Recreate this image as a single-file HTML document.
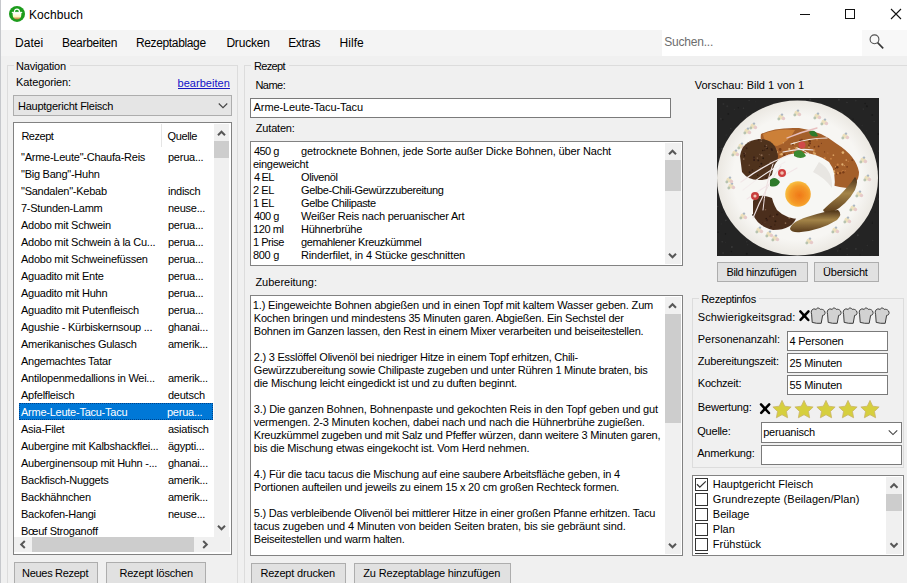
<!DOCTYPE html>
<html><head><meta charset="utf-8">
<style>
*{margin:0;padding:0;box-sizing:border-box}
html,body{width:907px;height:583px;overflow:hidden;background:#f0f0f0;font-family:"Liberation Sans",sans-serif;color:#000}
.a{position:absolute}
.t{position:absolute;font-size:11px;line-height:13px;white-space:pre}
</style></head><body>
<div class="a" style="left:0px;top:0px;width:1px;height:583px;background:#c6c8cc"></div>
<div class="a" style="left:1px;top:0px;width:906px;height:30px;background:#ffffff"></div>
<svg class="a" style="left:8px;top:5px" width="18" height="18" viewBox="0 0 18 18">
 <defs><linearGradient id="pot" x1="0" y1="0" x2="0" y2="1"><stop offset="0" stop-color="#ffffff"/><stop offset="0.55" stop-color="#fff6c0"/><stop offset="1" stop-color="#b86a20"/></linearGradient></defs>
 <circle cx="9" cy="8.9" r="8" fill="#1c9c1c"/>
 <path d="M4.6 8 h8.8 q0 4.5 -1.6 5.6 q-1.2 0.9 -2.8 0.9 q-1.6 0 -2.8 -0.9 q-1.6 -1.1 -1.6 -5.6z" fill="url(#pot)"/>
 <path d="M3.8 7.4 h10.4" stroke="#ffffff" stroke-width="1.1"/>
 <path d="M6.4 7.4 q0 -3.3 2.6 -3.3 q2.6 0 2.6 3.3" fill="none" stroke="#ffffff" stroke-width="1.2"/>
</svg>
<div class="t" id="title" style="left:29.00px;top:8px;font-size:12px;line-height:15px;letter-spacing:0.079px">Kochbuch</div>
<div class="a" style="left:800px;top:14px;width:10px;height:1px;background:#111"></div>
<div class="a" style="left:845px;top:9px;width:10px;height:10px;border:1px solid #111"></div>
<svg class="a" style="left:890px;top:8px" width="12" height="12" viewBox="0 0 12 12"><path d="M1 1 L11 11 M11 1 L1 11" stroke="#111" stroke-width="1.1"/></svg>
<div class="a" style="left:1px;top:30px;width:906px;height:26px;background:#f4f4f4"></div>
<div class="t" id="menu0" style="left:15.00px;top:36px;font-size:12px;line-height:15px;letter-spacing:0.025px">Datei</div>
<div class="t" id="menu1" style="left:62.00px;top:36px;font-size:12px;line-height:15px;letter-spacing:-0.294px">Bearbeiten</div>
<div class="t" id="menu2" style="left:136.00px;top:36px;font-size:12px;line-height:15px;letter-spacing:-0.363px">Rezeptablage</div>
<div class="t" id="menu3" style="left:226.40px;top:36px;font-size:12px;line-height:15px;letter-spacing:-0.183px">Drucken</div>
<div class="t" id="menu4" style="left:288.20px;top:36px;font-size:12px;line-height:15px;letter-spacing:-0.330px">Extras</div>
<div class="t" id="menu5" style="left:339.40px;top:36px;font-size:12px;line-height:15px;letter-spacing:0.100px">Hilfe</div>
<div class="a" style="left:662px;top:30px;width:200px;height:26px;background:#ffffff"></div>
<div class="a" style="left:862px;top:30px;width:45px;height:26px;background:#f8f8f8"></div>
<div class="t" id="search" style="left:664.20px;top:35px;font-size:12px;line-height:15px;letter-spacing:-0.200px;color:#6d6d6d">Suchen...</div>
<svg class="a" style="left:866px;top:31px" width="20" height="20" viewBox="0 0 20 20"><circle cx="8.5" cy="8.3" r="4.4" fill="none" stroke="#505050" stroke-width="1.1"/><path d="M11.6 11.6 L17.2 17.4" stroke="#383838" stroke-width="1.6"/></svg>
<div class="a" style="left:7px;top:65px;width:231px;height:530px;border:1px solid #dcdcdc"></div>
<div class="a" style="left:14px;top:60px;width:56px;height:10px;background:#f0f0f0"></div>
<div class="t" id="nav" style="left:16.00px;top:60px;font-size:11px;line-height:13px;letter-spacing:-0.215px">Navigation</div>
<div class="t" id="kat" style="left:16.00px;top:76px;font-size:11px;line-height:13px;letter-spacing:-0.110px">Kategorien:</div>
<div class="t" id="bearb" style="left:177.50px;top:77px;font-size:11px;line-height:13px;letter-spacing:0.040px;color:#1010c8">bearbeiten</div>
<div class="a" style="left:178px;top:88px;width:52px;height:1px;background:#1818c0"></div>
<div class="a" style="left:13px;top:95px;width:219px;height:21px;background:#e5e5e5;border:1px solid #adadad"></div>
<div class="t" id="combo" style="left:18.00px;top:100px;font-size:11px;line-height:13px;letter-spacing:-0.253px">Hauptgericht Fleisch</div>
<div class="a" style="left:13px;top:122px;width:219px;height:433px;background:#ffffff;border:1px solid #828282"></div>
<div class="t" id="hdr1" style="left:21.40px;top:130px;font-size:11px;line-height:13px;letter-spacing:-0.480px">Rezept</div>
<div class="a" style="left:161px;top:124px;width:1px;height:23px;background:#e5e5e5"></div>
<div class="t" id="hdr2" style="left:167.60px;top:130px;font-size:11px;line-height:13px;letter-spacing:-0.420px">Quelle</div>
<div class="a" style="left:19px;top:403px;width:194px;height:17px;background:#0078d7;outline:1px dotted rgba(0,0,40,0.45);outline-offset:-1px"></div>
<div class="a" style="left:14px;top:146px;width:200px;height:391px;overflow:hidden">
<div class="t" id="r0a" style="left:7.00px;top:5px;font-size:11px;line-height:13px;letter-spacing:-0.250px">&quot;Arme-Leute&quot;-Chaufa-Reis</div>
<div class="t" id="r0b" style="left:154.00px;top:5px;font-size:11px;line-height:13px;letter-spacing:-0.250px">perua...</div>
<div class="t" id="r1a" style="left:7.00px;top:22px;font-size:11px;line-height:13px;letter-spacing:-0.250px">&quot;Big Bang&quot;-Huhn</div>
<div class="t" id="r2a" style="left:7.00px;top:39px;font-size:11px;line-height:13px;letter-spacing:-0.250px">&quot;Sandalen&quot;-Kebab</div>
<div class="t" id="r2b" style="left:154.00px;top:39px;font-size:11px;line-height:13px;letter-spacing:-0.250px">indisch</div>
<div class="t" id="r3a" style="left:7.00px;top:56px;font-size:11px;line-height:13px;letter-spacing:-0.250px">7-Stunden-Lamm</div>
<div class="t" id="r3b" style="left:154.00px;top:56px;font-size:11px;line-height:13px;letter-spacing:-0.250px">neuse...</div>
<div class="t" id="r4a" style="left:7.00px;top:73px;font-size:11px;line-height:13px;letter-spacing:-0.250px">Adobo mit Schwein</div>
<div class="t" id="r4b" style="left:154.00px;top:73px;font-size:11px;line-height:13px;letter-spacing:-0.250px">perua...</div>
<div class="t" id="r5a" style="left:7.00px;top:90px;font-size:11px;line-height:13px;letter-spacing:-0.250px">Adobo mit Schwein à la Cu...</div>
<div class="t" id="r5b" style="left:154.00px;top:90px;font-size:11px;line-height:13px;letter-spacing:-0.250px">perua...</div>
<div class="t" id="r6a" style="left:7.00px;top:107px;font-size:11px;line-height:13px;letter-spacing:-0.250px">Adobo mit Schweinefüssen</div>
<div class="t" id="r6b" style="left:154.00px;top:107px;font-size:11px;line-height:13px;letter-spacing:-0.250px">perua...</div>
<div class="t" id="r7a" style="left:7.00px;top:124px;font-size:11px;line-height:13px;letter-spacing:-0.250px">Aguadito mit Ente</div>
<div class="t" id="r7b" style="left:154.00px;top:124px;font-size:11px;line-height:13px;letter-spacing:-0.250px">perua...</div>
<div class="t" id="r8a" style="left:7.00px;top:141px;font-size:11px;line-height:13px;letter-spacing:-0.250px">Aguadito mit Huhn</div>
<div class="t" id="r8b" style="left:154.00px;top:141px;font-size:11px;line-height:13px;letter-spacing:-0.250px">perua...</div>
<div class="t" id="r9a" style="left:7.00px;top:158px;font-size:11px;line-height:13px;letter-spacing:-0.250px">Aguadito mit Putenfleisch</div>
<div class="t" id="r9b" style="left:154.00px;top:158px;font-size:11px;line-height:13px;letter-spacing:-0.250px">perua...</div>
<div class="t" id="r10a" style="left:7.00px;top:175px;font-size:11px;line-height:13px;letter-spacing:-0.250px">Agushie - Kürbiskernsoup ...</div>
<div class="t" id="r10b" style="left:154.00px;top:175px;font-size:11px;line-height:13px;letter-spacing:-0.250px">ghanai...</div>
<div class="t" id="r11a" style="left:7.00px;top:192px;font-size:11px;line-height:13px;letter-spacing:-0.250px">Amerikanisches Gulasch</div>
<div class="t" id="r11b" style="left:154.00px;top:192px;font-size:11px;line-height:13px;letter-spacing:-0.250px">amerik...</div>
<div class="t" id="r12a" style="left:7.00px;top:209px;font-size:11px;line-height:13px;letter-spacing:-0.250px">Angemachtes Tatar</div>
<div class="t" id="r13a" style="left:7.00px;top:226px;font-size:11px;line-height:13px;letter-spacing:-0.250px">Antilopenmedallions in Wei...</div>
<div class="t" id="r13b" style="left:154.00px;top:226px;font-size:11px;line-height:13px;letter-spacing:-0.250px">amerik...</div>
<div class="t" id="r14a" style="left:7.00px;top:243px;font-size:11px;line-height:13px;letter-spacing:-0.250px">Apfelfleisch</div>
<div class="t" id="r14b" style="left:154.00px;top:243px;font-size:11px;line-height:13px;letter-spacing:-0.250px">deutsch</div>
<div class="t" id="r15a" style="left:7.00px;top:260px;font-size:11px;line-height:13px;letter-spacing:-0.250px;color:#ffffff">Arme-Leute-Tacu-Tacu</div>
<div class="t" id="r15b" style="left:153.00px;top:260px;font-size:11px;line-height:13px;letter-spacing:-0.250px;color:#ffffff">perua...</div>
<div class="t" id="r16a" style="left:7.00px;top:277px;font-size:11px;line-height:13px;letter-spacing:-0.250px">Asia-Filet</div>
<div class="t" id="r16b" style="left:154.00px;top:277px;font-size:11px;line-height:13px;letter-spacing:-0.250px">asiatisch</div>
<div class="t" id="r17a" style="left:7.00px;top:294px;font-size:11px;line-height:13px;letter-spacing:-0.250px">Aubergine mit Kalbshackflei...</div>
<div class="t" id="r17b" style="left:154.00px;top:294px;font-size:11px;line-height:13px;letter-spacing:-0.250px">ägypti...</div>
<div class="t" id="r18a" style="left:7.00px;top:311px;font-size:11px;line-height:13px;letter-spacing:-0.250px">Auberginensoup mit Huhn -...</div>
<div class="t" id="r18b" style="left:154.00px;top:311px;font-size:11px;line-height:13px;letter-spacing:-0.250px">ghanai...</div>
<div class="t" id="r19a" style="left:7.00px;top:328px;font-size:11px;line-height:13px;letter-spacing:-0.250px">Backfisch-Nuggets</div>
<div class="t" id="r19b" style="left:154.00px;top:328px;font-size:11px;line-height:13px;letter-spacing:-0.250px">amerik...</div>
<div class="t" id="r20a" style="left:7.00px;top:345px;font-size:11px;line-height:13px;letter-spacing:-0.250px">Backhähnchen</div>
<div class="t" id="r20b" style="left:154.00px;top:345px;font-size:11px;line-height:13px;letter-spacing:-0.250px">amerik...</div>
<div class="t" id="r21a" style="left:7.00px;top:362px;font-size:11px;line-height:13px;letter-spacing:-0.250px">Backofen-Hangi</div>
<div class="t" id="r21b" style="left:154.00px;top:362px;font-size:11px;line-height:13px;letter-spacing:-0.250px">neuse...</div>
<div class="t" id="r22a" style="left:7.00px;top:379px;font-size:11px;line-height:13px;letter-spacing:-0.250px">Bœuf Stroganoff</div>
</div>
<div class="a" style="left:214px;top:124px;width:15px;height:413px;background:#f0f0f0"></div>
<div class="a" style="left:214px;top:141px;width:15px;height:17px;background:#cdcdcd"></div>
<div class="a" style="left:14px;top:537px;width:216px;height:15px;background:#f0f0f0"></div>
<div class="a" style="left:32px;top:537px;width:162px;height:15px;background:#cdcdcd"></div>
<div class="a" style="left:14px;top:562px;width:84px;height:23px;background:#e1e1e1;border:1px solid #adadad"></div>
<div class="t" id="b1" style="left:22.00px;top:567px;font-size:11px;line-height:13px;letter-spacing:-0.291px">Neues Rezept</div>
<div class="a" style="left:106px;top:562px;width:100px;height:23px;background:#e1e1e1;border:1px solid #adadad"></div>
<div class="t" id="b2" style="left:119.40px;top:567px;font-size:11px;line-height:13px;letter-spacing:-0.164px">Rezept löschen</div>
<div class="a" style="left:244px;top:65px;width:700px;height:530px;border:1px solid #dcdcdc"></div>
<div class="a" style="left:251px;top:60px;width:38px;height:10px;background:#f0f0f0"></div>
<div class="t" id="rez" style="left:254.00px;top:60px;font-size:11px;line-height:13px;letter-spacing:-0.660px">Rezept</div>
<div class="t" id="name" style="left:255.40px;top:79px;font-size:11px;line-height:13px;letter-spacing:-0.525px">Name:</div>
<div class="a" style="left:250px;top:98px;width:421px;height:20px;background:#ffffff;border:1px solid #7a7a7a"></div>
<div class="t" id="namev" style="left:253.60px;top:101px;font-size:11px;line-height:13px;letter-spacing:-0.094px">Arme-Leute-Tacu-Tacu</div>
<div class="t" id="zut" style="left:255.80px;top:122px;font-size:11px;line-height:13px;letter-spacing:-0.187px">Zutaten:</div>
<div class="a" style="left:250px;top:141px;width:433px;height:125px;background:#ffffff;border:1px solid #828282"></div>
<div class="t" id="z0a" style="left:253.90px;top:145px;font-size:11px;line-height:13px;letter-spacing:-0.530px">450 g</div>
<div class="t" id="z0b" style="left:301.00px;top:145px;font-size:11px;line-height:13px;letter-spacing:-0.130px">getrocknete Bohnen, jede Sorte außer Dicke Bohnen, über Nacht</div>
<div class="t" id="z1a" style="left:252.90px;top:158px;font-size:11px;line-height:13px;letter-spacing:-0.250px">eingeweicht</div>
<div class="t" id="z2a" style="left:253.90px;top:171px;font-size:11px;line-height:13px;letter-spacing:-0.729px">4 EL</div>
<div class="t" id="z2b" style="left:301.00px;top:171px;font-size:11px;line-height:13px;letter-spacing:-0.416px">Olivenöl</div>
<div class="t" id="z3a" style="left:252.90px;top:184px;font-size:11px;line-height:13px;letter-spacing:-0.396px">2 EL</div>
<div class="t" id="z3b" style="left:301.00px;top:184px;font-size:11px;line-height:13px;letter-spacing:-0.380px">Gelbe-Chili-Gewürzzubereitung</div>
<div class="t" id="z4a" style="left:252.90px;top:197px;font-size:11px;line-height:13px;letter-spacing:-0.397px">1 EL</div>
<div class="t" id="z4b" style="left:301.00px;top:197px;font-size:11px;line-height:13px;letter-spacing:-0.369px">Gelbe Chilipaste</div>
<div class="t" id="z5a" style="left:253.90px;top:210px;font-size:11px;line-height:13px;letter-spacing:-0.530px">400 g</div>
<div class="t" id="z5b" style="left:301.00px;top:210px;font-size:11px;line-height:13px;letter-spacing:-0.212px">Weißer Reis nach peruanischer Art</div>
<div class="t" id="z6a" style="left:252.90px;top:223px;font-size:11px;line-height:13px;letter-spacing:-0.370px">120 ml</div>
<div class="t" id="z6b" style="left:301.00px;top:223px;font-size:11px;line-height:13px;letter-spacing:-0.290px">Hühnerbrühe</div>
<div class="t" id="z7a" style="left:252.90px;top:236px;font-size:11px;line-height:13px;letter-spacing:-0.463px">1 Prise</div>
<div class="t" id="z7b" style="left:301.00px;top:236px;font-size:11px;line-height:13px;letter-spacing:-0.368px">gemahlener Kreuzkümmel</div>
<div class="t" id="z8a" style="left:252.90px;top:249px;font-size:11px;line-height:13px;letter-spacing:-0.280px">800 g</div>
<div class="t" id="z8b" style="left:301.00px;top:249px;font-size:11px;line-height:13px;letter-spacing:-0.147px">Rinderfilet, in 4 Stücke geschnitten</div>
<div class="a" style="left:665px;top:143px;width:16px;height:121px;background:#f0f0f0"></div>
<div class="a" style="left:665px;top:160px;width:16px;height:31px;background:#cdcdcd"></div>
<div class="t" id="zub" style="left:255.40px;top:276px;font-size:11px;line-height:13px;letter-spacing:-0.018px">Zubereitung:</div>
<div class="a" style="left:250px;top:295px;width:433px;height:261px;background:#ffffff;border:1px solid #828282"></div>
<div class="t" id="zb0" style="left:252.80px;top:299px;font-size:11px;line-height:13px;letter-spacing:-0.157px">1.) Eingeweichte Bohnen abgießen und in einen Topf mit kaltem Wasser geben. Zum</div>
<div class="t" id="zb1" style="left:253.80px;top:312px;font-size:11px;line-height:13px;letter-spacing:-0.208px">Kochen bringen und mindestens 35 Minuten garen. Abgießen. Ein Sechstel der</div>
<div class="t" id="zb2" style="left:253.80px;top:325px;font-size:11px;line-height:13px;letter-spacing:-0.241px">Bohnen im Ganzen lassen, den Rest in einem Mixer verarbeiten und beiseitestellen.</div>
<div class="t" id="zb4" style="left:253.80px;top:351px;font-size:11px;line-height:13px;letter-spacing:-0.246px">2.) 3 Esslöffel Olivenöl bei niedriger Hitze in einem Topf erhitzen, Chili-</div>
<div class="t" id="zb5" style="left:253.80px;top:364px;font-size:11px;line-height:13px;letter-spacing:-0.222px">Gewürzzubereitung sowie Chilipaste zugeben und unter Rühren 1 Minute braten, bis</div>
<div class="t" id="zb6" style="left:253.80px;top:377px;font-size:11px;line-height:13px;letter-spacing:-0.157px">die Mischung leicht eingedickt ist und zu duften beginnt.</div>
<div class="t" id="zb8" style="left:253.80px;top:403px;font-size:11px;line-height:13px;letter-spacing:-0.122px">3.) Die ganzen Bohnen, Bohnenpaste und gekochten Reis in den Topf geben und gut</div>
<div class="t" id="zb9" style="left:253.80px;top:416px;font-size:11px;line-height:13px;letter-spacing:-0.153px">vermengen. 2-3 Minuten kochen, dabei nach und nach die Hühnerbrühe zugießen.</div>
<div class="t" id="zb10" style="left:253.80px;top:429px;font-size:11px;line-height:13px;letter-spacing:-0.238px">Kreuzkümmel zugeben und mit Salz und Pfeffer würzen, dann weitere 3 Minuten garen,</div>
<div class="t" id="zb11" style="left:253.80px;top:442px;font-size:11px;line-height:13px;letter-spacing:-0.171px">bis die Mischung etwas eingekocht ist. Vom Herd nehmen.</div>
<div class="t" id="zb13" style="left:253.80px;top:468px;font-size:11px;line-height:13px;letter-spacing:-0.173px">4.) Für die tacu tacus die Mischung auf eine saubere Arbeitsfläche geben, in 4</div>
<div class="t" id="zb14" style="left:253.80px;top:481px;font-size:11px;line-height:13px;letter-spacing:-0.207px">Portionen aufteilen und jeweils zu einem 15 x 20 cm großen Rechteck formen.</div>
<div class="t" id="zb16" style="left:253.80px;top:507px;font-size:11px;line-height:13px;letter-spacing:-0.206px">5.) Das verbleibende Olivenöl bei mittlerer Hitze in einer großen Pfanne erhitzen. Tacu</div>
<div class="t" id="zb17" style="left:253.80px;top:520px;font-size:11px;line-height:13px;letter-spacing:-0.104px">tacus zugeben und 4 Minuten von beiden Seiten braten, bis sie gebräunt sind.</div>
<div class="t" id="zb18" style="left:253.80px;top:533px;font-size:11px;line-height:13px;letter-spacing:-0.240px">Beiseitestellen und warm halten.</div>
<div class="a" style="left:665px;top:297px;width:16px;height:257px;background:#f0f0f0"></div>
<div class="a" style="left:665px;top:314px;width:16px;height:109px;background:#cdcdcd"></div>
<div class="a" style="left:251px;top:563px;width:95px;height:23px;background:#e1e1e1;border:1px solid #adadad"></div>
<div class="t" id="b3" style="left:260.40px;top:567px;font-size:11px;line-height:13px;letter-spacing:-0.182px">Rezept drucken</div>
<div class="a" style="left:354px;top:563px;width:157px;height:23px;background:#e1e1e1;border:1px solid #adadad"></div>
<div class="t" id="b4" style="left:363.20px;top:567px;font-size:11px;line-height:13px;letter-spacing:-0.140px">Zu Rezeptablage hinzufügen</div>
<div class="t" id="vor" style="left:694.80px;top:79px;font-size:11px;line-height:13px;letter-spacing:-0.010px">Vorschau: Bild 1 von 1</div>
<svg class="a" style="left:717px;top:98px" width="162" height="158" viewBox="0 0 162 158">
<defs>
<filter id="bl" x="-10%" y="-10%" width="120%" height="120%"><feGaussianBlur stdDeviation="0.6"/></filter>
<filter id="bl2" x="-10%" y="-10%" width="120%" height="120%"><feGaussianBlur stdDeviation="1.0"/></filter>
<radialGradient id="yolk" cx="0.55" cy="0.55" r="0.6"><stop offset="0" stop-color="#f07818"/><stop offset="0.6" stop-color="#f59a28"/><stop offset="1" stop-color="#f8c848"/></radialGradient>
<radialGradient id="plate" cx="0.5" cy="0.5" r="0.5"><stop offset="0.8" stop-color="#f7f6f3"/><stop offset="1" stop-color="#ebe8e2"/></radialGradient>
<linearGradient id="plant" x1="0" y1="0" x2="0" y2="1"><stop offset="0" stop-color="#4a3018"/><stop offset="0.45" stop-color="#a48448"/><stop offset="1" stop-color="#5a3c1c"/></linearGradient>
</defs>
<rect width="162" height="158" fill="#242424"/>
<g><circle cx="9.2" cy="37.0" r="0.50" fill="#383838"/><circle cx="120.6" cy="152.9" r="0.83" fill="#303030"/><circle cx="8.4" cy="144.5" r="0.46" fill="#303030"/><circle cx="146.4" cy="11.1" r="0.85" fill="#303030"/><circle cx="145.6" cy="152.1" r="0.52" fill="#303030"/><circle cx="123.2" cy="151.0" r="0.93" fill="#1a1a1a"/><circle cx="155.3" cy="124.1" r="0.54" fill="#1a1a1a"/><circle cx="14.4" cy="153.4" r="0.73" fill="#1a1a1a"/><circle cx="155.8" cy="142.2" r="0.54" fill="#383838"/><circle cx="161.6" cy="101.1" r="0.93" fill="#303030"/><circle cx="5.8" cy="21.5" r="0.64" fill="#1a1a1a"/><circle cx="26.5" cy="10.2" r="0.67" fill="#383838"/><circle cx="32.1" cy="2.4" r="0.72" fill="#383838"/><circle cx="38.3" cy="3.8" r="0.45" fill="#303030"/><circle cx="157.1" cy="23.5" r="0.60" fill="#383838"/><circle cx="10.3" cy="8.3" r="0.98" fill="#303030"/><circle cx="30.5" cy="146.8" r="0.74" fill="#303030"/><circle cx="2.7" cy="49.2" r="0.44" fill="#1a1a1a"/><circle cx="5.0" cy="114.4" r="0.53" fill="#1a1a1a"/><circle cx="29.8" cy="155.8" r="1.00" fill="#1a1a1a"/><circle cx="21.3" cy="9.8" r="0.68" fill="#1a1a1a"/><circle cx="155.3" cy="125.5" r="0.59" fill="#1a1a1a"/><circle cx="4.9" cy="50.7" r="0.87" fill="#383838"/><circle cx="150.3" cy="147.6" r="0.77" fill="#303030"/><circle cx="124.6" cy="13.9" r="0.95" fill="#303030"/><circle cx="6.1" cy="155.0" r="0.95" fill="#303030"/><circle cx="5.2" cy="143.8" r="0.80" fill="#383838"/><circle cx="17.3" cy="11.2" r="0.50" fill="#383838"/><circle cx="14.9" cy="149.0" r="0.96" fill="#383838"/><circle cx="155.2" cy="16.9" r="0.89" fill="#1a1a1a"/><circle cx="130.0" cy="4.4" r="0.71" fill="#383838"/><circle cx="93.1" cy="1.6" r="0.86" fill="#383838"/><circle cx="6.4" cy="5.9" r="1.00" fill="#303030"/><circle cx="130.3" cy="156.5" r="0.84" fill="#303030"/><circle cx="136.0" cy="21.1" r="0.72" fill="#1a1a1a"/><circle cx="145.1" cy="27.3" r="0.59" fill="#303030"/><circle cx="138.9" cy="150.8" r="0.92" fill="#383838"/><circle cx="4.2" cy="125.9" r="0.54" fill="#303030"/><circle cx="8.5" cy="135.9" r="0.78" fill="#1a1a1a"/><circle cx="130.0" cy="150.7" r="0.59" fill="#383838"/><circle cx="97.2" cy="157.6" r="0.94" fill="#303030"/><circle cx="148.1" cy="5.5" r="0.75" fill="#1a1a1a"/><circle cx="3.8" cy="20.7" r="1.00" fill="#303030"/><circle cx="143.1" cy="156.8" r="0.66" fill="#1a1a1a"/><circle cx="121.9" cy="1.7" r="0.92" fill="#383838"/><circle cx="155.0" cy="158.0" r="0.74" fill="#303030"/><circle cx="29.7" cy="143.8" r="0.73" fill="#303030"/><circle cx="149.7" cy="32.8" r="0.41" fill="#383838"/><circle cx="8.8" cy="122.3" r="0.88" fill="#383838"/><circle cx="158.1" cy="114.0" r="0.47" fill="#1a1a1a"/><circle cx="149.9" cy="8.3" r="0.97" fill="#1a1a1a"/><circle cx="140.8" cy="137.2" r="0.94" fill="#383838"/><circle cx="161.6" cy="53.1" r="0.86" fill="#303030"/><circle cx="161.4" cy="36.0" r="0.92" fill="#1a1a1a"/><circle cx="13.8" cy="30.5" r="0.59" fill="#383838"/><circle cx="11.3" cy="15.9" r="0.84" fill="#1a1a1a"/><circle cx="1.0" cy="134.2" r="0.84" fill="#1a1a1a"/><circle cx="0.6" cy="108.5" r="0.78" fill="#383838"/><circle cx="29.6" cy="18.2" r="0.94" fill="#303030"/><circle cx="138.8" cy="2.6" r="0.88" fill="#303030"/></g>
<ellipse cx="80.5" cy="80" rx="80.5" ry="77.5" fill="url(#plate)"/>
<g filter="url(#bl)" opacity="0.8"><circle cx="36" cy="28" r="2.6" fill="#ebdcb0"/><circle cx="38.5" cy="29.5" r="1.7" fill="#e4c0c0"/><circle cx="33.8" cy="30" r="1.4" fill="#a8b8a0"/><circle cx="37" cy="25.6" r="1.2" fill="#9aa8b8"/><circle cx="30" cy="33" r="2.6" fill="#ebdcb0"/><circle cx="32.5" cy="34.5" r="1.7" fill="#e4c0c0"/><circle cx="27.8" cy="35" r="1.4" fill="#a8b8a0"/><circle cx="31" cy="30.6" r="1.2" fill="#9aa8b8"/><circle cx="64" cy="19" r="2.6" fill="#ebdcb0"/><circle cx="66.5" cy="20.5" r="1.7" fill="#e4c0c0"/><circle cx="61.8" cy="21" r="1.4" fill="#a8b8a0"/><circle cx="65" cy="16.6" r="1.2" fill="#9aa8b8"/><circle cx="100" cy="18" r="2.6" fill="#ebdcb0"/><circle cx="102.5" cy="19.5" r="1.7" fill="#e4c0c0"/><circle cx="97.8" cy="20" r="1.4" fill="#a8b8a0"/><circle cx="101" cy="15.6" r="1.2" fill="#9aa8b8"/><circle cx="107" cy="24" r="2.6" fill="#ebdcb0"/><circle cx="109.5" cy="25.5" r="1.7" fill="#e4c0c0"/><circle cx="104.8" cy="26" r="1.4" fill="#a8b8a0"/><circle cx="108" cy="21.6" r="1.2" fill="#9aa8b8"/><circle cx="128" cy="38" r="2.6" fill="#ebdcb0"/><circle cx="130.5" cy="39.5" r="1.7" fill="#e4c0c0"/><circle cx="125.8" cy="40" r="1.4" fill="#a8b8a0"/><circle cx="129" cy="35.6" r="1.2" fill="#9aa8b8"/><circle cx="146" cy="62" r="2.6" fill="#ebdcb0"/><circle cx="148.5" cy="63.5" r="1.7" fill="#e4c0c0"/><circle cx="143.8" cy="64" r="1.4" fill="#a8b8a0"/><circle cx="147" cy="59.6" r="1.2" fill="#9aa8b8"/><circle cx="142" cy="96" r="2.6" fill="#ebdcb0"/><circle cx="144.5" cy="97.5" r="1.7" fill="#e4c0c0"/><circle cx="139.8" cy="98" r="1.4" fill="#a8b8a0"/><circle cx="143" cy="93.6" r="1.2" fill="#9aa8b8"/><circle cx="130" cy="122" r="2.6" fill="#ebdcb0"/><circle cx="132.5" cy="123.5" r="1.7" fill="#e4c0c0"/><circle cx="127.8" cy="124" r="1.4" fill="#a8b8a0"/><circle cx="131" cy="119.6" r="1.2" fill="#9aa8b8"/><circle cx="118" cy="132" r="2.6" fill="#ebdcb0"/><circle cx="120.5" cy="133.5" r="1.7" fill="#e4c0c0"/><circle cx="115.8" cy="134" r="1.4" fill="#a8b8a0"/><circle cx="119" cy="129.6" r="1.2" fill="#9aa8b8"/><circle cx="92" cy="143" r="2.6" fill="#ebdcb0"/><circle cx="94.5" cy="144.5" r="1.7" fill="#e4c0c0"/><circle cx="89.8" cy="145" r="1.4" fill="#a8b8a0"/><circle cx="93" cy="140.6" r="1.2" fill="#9aa8b8"/><circle cx="58" cy="140" r="2.6" fill="#ebdcb0"/><circle cx="60.5" cy="141.5" r="1.7" fill="#e4c0c0"/><circle cx="55.8" cy="142" r="1.4" fill="#a8b8a0"/><circle cx="59" cy="137.6" r="1.2" fill="#9aa8b8"/><circle cx="52" cy="136" r="2.6" fill="#ebdcb0"/><circle cx="54.5" cy="137.5" r="1.7" fill="#e4c0c0"/><circle cx="49.8" cy="138" r="1.4" fill="#a8b8a0"/><circle cx="53" cy="133.6" r="1.2" fill="#9aa8b8"/><circle cx="26" cy="118" r="2.6" fill="#ebdcb0"/><circle cx="28.5" cy="119.5" r="1.7" fill="#e4c0c0"/><circle cx="23.8" cy="120" r="1.4" fill="#a8b8a0"/><circle cx="27" cy="115.6" r="1.2" fill="#9aa8b8"/><circle cx="14" cy="88" r="2.6" fill="#ebdcb0"/><circle cx="16.5" cy="89.5" r="1.7" fill="#e4c0c0"/><circle cx="11.8" cy="90" r="1.4" fill="#a8b8a0"/><circle cx="15" cy="85.6" r="1.2" fill="#9aa8b8"/><circle cx="12" cy="82" r="2.6" fill="#ebdcb0"/><circle cx="14.5" cy="83.5" r="1.7" fill="#e4c0c0"/><circle cx="9.8" cy="84" r="1.4" fill="#a8b8a0"/><circle cx="13" cy="79.6" r="1.2" fill="#9aa8b8"/><circle cx="18" cy="55" r="2.6" fill="#ebdcb0"/><circle cx="20.5" cy="56.5" r="1.7" fill="#e4c0c0"/><circle cx="15.8" cy="57" r="1.4" fill="#a8b8a0"/><circle cx="19" cy="52.6" r="1.2" fill="#9aa8b8"/><circle cx="24" cy="48" r="2.6" fill="#ebdcb0"/><circle cx="26.5" cy="49.5" r="1.7" fill="#e4c0c0"/><circle cx="21.8" cy="50" r="1.4" fill="#a8b8a0"/><circle cx="25" cy="45.6" r="1.2" fill="#9aa8b8"/><circle cx="150" cy="80" r="2.6" fill="#ebdcb0"/><circle cx="152.5" cy="81.5" r="1.7" fill="#e4c0c0"/><circle cx="147.8" cy="82" r="1.4" fill="#a8b8a0"/><circle cx="151" cy="77.6" r="1.2" fill="#9aa8b8"/><circle cx="80" cy="15" r="2.6" fill="#ebdcb0"/><circle cx="82.5" cy="16.5" r="1.7" fill="#e4c0c0"/><circle cx="77.8" cy="17" r="1.4" fill="#a8b8a0"/><circle cx="81" cy="12.6" r="1.2" fill="#9aa8b8"/><circle cx="42" cy="132" r="2.6" fill="#ebdcb0"/><circle cx="44.5" cy="133.5" r="1.7" fill="#e4c0c0"/><circle cx="39.8" cy="134" r="1.4" fill="#a8b8a0"/><circle cx="43" cy="129.6" r="1.2" fill="#9aa8b8"/><circle cx="136" cy="110" r="2.6" fill="#ebdcb0"/><circle cx="138.5" cy="111.5" r="1.7" fill="#e4c0c0"/><circle cx="133.8" cy="112" r="1.4" fill="#a8b8a0"/><circle cx="137" cy="107.6" r="1.2" fill="#9aa8b8"/></g>
<g filter="url(#bl)">
<path d="M44 36 Q58 29 82 30 Q104 33 120 46 Q139 58 142 74 Q142 86 130 90 Q112 88 96 80 Q70 70 52 58 Q42 47 44 36Z" fill="#a45e2c"/>
<path d="M46 36 Q60 30 78 32 Q72 44 60 48 Q47 46 46 36Z" fill="#cc8038"/>
<g><circle cx="86.8" cy="57.8" r="0.55" fill="#6a3414"/><circle cx="125.9" cy="73.6" r="1.33" fill="#c88040"/><circle cx="67.3" cy="56.7" r="1.30" fill="#7a3e18"/><circle cx="67.9" cy="58.3" r="1.01" fill="#7a3e18"/><circle cx="129.3" cy="62.0" r="0.86" fill="#d8a060"/><circle cx="77.8" cy="49.3" r="0.63" fill="#c88040"/><circle cx="119.9" cy="75.6" r="1.12" fill="#6a3414"/><circle cx="121.5" cy="75.5" r="0.66" fill="#c88040"/><circle cx="116.9" cy="73.2" r="1.17" fill="#d8a060"/><circle cx="83.5" cy="53.6" r="0.68" fill="#c88040"/><circle cx="113.9" cy="60.7" r="0.97" fill="#c88040"/><circle cx="135.2" cy="62.1" r="0.96" fill="#7a3e18"/><circle cx="103.0" cy="63.9" r="0.81" fill="#d8a060"/><circle cx="107.8" cy="60.2" r="0.96" fill="#c88040"/><circle cx="59.0" cy="52.0" r="1.39" fill="#c88040"/><circle cx="63.1" cy="51.5" r="1.39" fill="#7a3e18"/><circle cx="120.8" cy="74.9" r="1.23" fill="#c88040"/><circle cx="97.2" cy="52.4" r="1.09" fill="#c88040"/><circle cx="76.6" cy="45.8" r="0.57" fill="#6a3414"/><circle cx="55.7" cy="49.9" r="1.26" fill="#d8a060"/><circle cx="52.6" cy="53.4" r="0.86" fill="#7a3e18"/><circle cx="95.4" cy="57.0" r="0.89" fill="#c88040"/><circle cx="127.2" cy="67.6" r="0.53" fill="#e0b070"/><circle cx="104.4" cy="45.2" r="0.54" fill="#6a3414"/><circle cx="66.9" cy="65.4" r="0.97" fill="#e0b070"/><circle cx="68.7" cy="58.5" r="0.94" fill="#c88040"/><circle cx="116.4" cy="57.2" r="0.86" fill="#d8a060"/><circle cx="107.6" cy="59.8" r="0.84" fill="#c88040"/><circle cx="72.3" cy="51.1" r="1.16" fill="#e0b070"/><circle cx="100.0" cy="41.4" r="1.14" fill="#c88040"/><circle cx="72.6" cy="59.1" r="1.29" fill="#7a3e18"/><circle cx="66.4" cy="44.8" r="0.78" fill="#d8a060"/><circle cx="57.9" cy="65.8" r="1.28" fill="#c88040"/><circle cx="104.4" cy="61.7" r="0.86" fill="#d8a060"/><circle cx="93.6" cy="57.6" r="1.20" fill="#7a3e18"/><circle cx="101.6" cy="48.4" r="0.88" fill="#6a3414"/><circle cx="131.3" cy="63.3" r="0.56" fill="#c88040"/><circle cx="93.5" cy="56.9" r="1.19" fill="#e0b070"/><circle cx="83.6" cy="49.0" r="1.37" fill="#6a3414"/><circle cx="91.9" cy="48.0" r="0.97" fill="#6a3414"/><circle cx="91.1" cy="55.4" r="1.08" fill="#e0b070"/><circle cx="117.3" cy="75.5" r="0.98" fill="#e0b070"/><circle cx="84.8" cy="41.9" r="1.08" fill="#7a3e18"/><circle cx="97.4" cy="60.0" r="1.27" fill="#6a3414"/><circle cx="92.4" cy="48.6" r="0.69" fill="#6a3414"/><circle cx="77.1" cy="45.4" r="1.17" fill="#e0b070"/><circle cx="93.1" cy="45.4" r="0.89" fill="#6a3414"/><circle cx="80.1" cy="54.9" r="1.25" fill="#c88040"/><circle cx="120.7" cy="66.7" r="1.08" fill="#c88040"/><circle cx="56.5" cy="51.6" r="0.64" fill="#e0b070"/><circle cx="118.8" cy="68.7" r="0.68" fill="#d8a060"/><circle cx="59.9" cy="54.2" r="1.17" fill="#e0b070"/><circle cx="75.8" cy="46.5" r="0.99" fill="#7a3e18"/><circle cx="126.3" cy="74.2" r="1.21" fill="#7a3e18"/><circle cx="125.8" cy="54.7" r="0.64" fill="#e0b070"/><circle cx="120.2" cy="69.3" r="1.29" fill="#6a3414"/><circle cx="80.0" cy="52.7" r="1.39" fill="#6a3414"/><circle cx="88.1" cy="59.4" r="0.63" fill="#6a3414"/><circle cx="125.4" cy="66.5" r="1.13" fill="#e0b070"/><circle cx="114.9" cy="72.8" r="1.34" fill="#c88040"/><circle cx="100.2" cy="61.5" r="0.78" fill="#6a3414"/><circle cx="91.8" cy="46.2" r="0.55" fill="#6a3414"/><circle cx="97.4" cy="48.8" r="0.89" fill="#7a3e18"/><circle cx="92.6" cy="43.3" r="1.27" fill="#6a3414"/><circle cx="128.2" cy="72.6" r="0.58" fill="#c88040"/><circle cx="96.7" cy="54.5" r="0.97" fill="#d8a060"/><circle cx="60.2" cy="61.6" r="0.84" fill="#e0b070"/><circle cx="79.5" cy="50.3" r="1.31" fill="#d8a060"/><circle cx="63.2" cy="65.7" r="0.65" fill="#c88040"/><circle cx="84.0" cy="54.9" r="0.75" fill="#e0b070"/><circle cx="118.4" cy="70.5" r="0.52" fill="#6a3414"/><circle cx="72.0" cy="55.4" r="0.58" fill="#7a3e18"/><circle cx="63.0" cy="66.4" r="1.26" fill="#6a3414"/><circle cx="51.9" cy="63.3" r="1.00" fill="#c88040"/><circle cx="83.2" cy="42.4" r="0.92" fill="#6a3414"/><circle cx="88.9" cy="58.0" r="1.30" fill="#c88040"/><circle cx="123.1" cy="75.1" r="1.21" fill="#7a3e18"/><circle cx="130.1" cy="68.8" r="0.84" fill="#7a3e18"/><circle cx="63.1" cy="56.5" r="1.04" fill="#c88040"/><circle cx="68.2" cy="63.5" r="1.19" fill="#6a3414"/><circle cx="97.7" cy="55.8" r="1.39" fill="#d8a060"/><circle cx="67.0" cy="63.0" r="1.14" fill="#d8a060"/><circle cx="62.5" cy="63.7" r="0.56" fill="#d8a060"/><circle cx="75.7" cy="54.4" r="0.89" fill="#c88040"/><circle cx="107.6" cy="53.9" r="0.64" fill="#7a3e18"/><circle cx="92.0" cy="49.1" r="0.85" fill="#d8a060"/><circle cx="64.6" cy="56.2" r="1.26" fill="#e0b070"/><circle cx="56.9" cy="65.2" r="1.09" fill="#e0b070"/><circle cx="110.9" cy="55.1" r="0.50" fill="#c88040"/><circle cx="125.9" cy="54.6" r="1.32" fill="#e0b070"/></g>
<path d="M23 58 Q25 43 42 41 Q59 41 61 58 Q61 74 50 81 Q33 85 25 74Z" fill="#50321f"/>
<path d="M36 103 Q40 95 52 99 Q74 106 80 118 Q76 132 56 132 Q40 128 36 116Z" fill="#4c2e1c"/>
<g><circle cx="54.0" cy="128.8" r="0.78" fill="#2e1a10"/><circle cx="52.1" cy="56.8" r="0.46" fill="#8a6a50"/><circle cx="45.9" cy="104.5" r="0.76" fill="#3a2216"/><circle cx="36.0" cy="116.9" r="0.88" fill="#2e1a10"/><circle cx="40.7" cy="77.3" r="0.79" fill="#2e1a10"/><circle cx="74.5" cy="108.4" r="0.78" fill="#2e1a10"/><circle cx="48.6" cy="111.8" r="0.70" fill="#7a5a44"/><circle cx="60.4" cy="116.5" r="1.06" fill="#3a2216"/><circle cx="44.2" cy="43.2" r="0.75" fill="#8a6a50"/><circle cx="32.3" cy="67.3" r="0.80" fill="#7a5a44"/><circle cx="49.2" cy="120.6" r="0.92" fill="#2e1a10"/><circle cx="54.6" cy="51.1" r="1.09" fill="#3a2216"/><circle cx="45.8" cy="79.3" r="0.47" fill="#2e1a10"/><circle cx="52.9" cy="118.4" r="0.85" fill="#3a2216"/><circle cx="67.3" cy="112.2" r="0.98" fill="#2e1a10"/><circle cx="53.6" cy="117.1" r="0.58" fill="#3a2216"/><circle cx="50.1" cy="122.1" r="1.08" fill="#3a2216"/><circle cx="37.0" cy="59.4" r="1.03" fill="#3a2216"/><circle cx="42.5" cy="68.5" r="0.56" fill="#2e1a10"/><circle cx="52.8" cy="67.2" r="0.60" fill="#3a2216"/><circle cx="45.8" cy="52.4" r="0.74" fill="#2e1a10"/><circle cx="58.4" cy="123.2" r="1.00" fill="#2e1a10"/><circle cx="49.0" cy="79.4" r="0.65" fill="#2e1a10"/><circle cx="53.6" cy="64.8" r="1.10" fill="#8a6a50"/><circle cx="76.7" cy="114.0" r="0.77" fill="#3a2216"/><circle cx="27.4" cy="57.8" r="0.87" fill="#2e1a10"/><circle cx="57.8" cy="126.9" r="0.76" fill="#3a2216"/><circle cx="47.1" cy="70.5" r="0.48" fill="#3a2216"/><circle cx="41.4" cy="41.9" r="0.71" fill="#3a2216"/><circle cx="68.5" cy="125.2" r="0.83" fill="#8a6a50"/><circle cx="47.6" cy="52.2" r="0.67" fill="#3a2216"/><circle cx="44.5" cy="41.5" r="0.62" fill="#8a6a50"/><circle cx="40.3" cy="60.1" r="0.71" fill="#8a6a50"/><circle cx="73.9" cy="111.7" r="0.86" fill="#8a6a50"/><circle cx="72.3" cy="119.8" r="1.01" fill="#8a6a50"/><circle cx="54.0" cy="63.4" r="0.43" fill="#8a6a50"/><circle cx="56.4" cy="118.6" r="0.75" fill="#7a5a44"/><circle cx="32.5" cy="44.2" r="0.61" fill="#7a5a44"/><circle cx="32.6" cy="74.3" r="0.94" fill="#2e1a10"/><circle cx="27.9" cy="55.3" r="0.74" fill="#8a6a50"/><circle cx="60.7" cy="104.8" r="0.51" fill="#2e1a10"/><circle cx="29.6" cy="50.2" r="1.05" fill="#3a2216"/><circle cx="59.2" cy="65.0" r="0.86" fill="#8a6a50"/><circle cx="26.7" cy="61.0" r="0.85" fill="#8a6a50"/><circle cx="49.4" cy="47.5" r="0.82" fill="#7a5a44"/><circle cx="27.1" cy="55.5" r="0.97" fill="#3a2216"/><circle cx="50.0" cy="50.3" r="1.01" fill="#2e1a10"/><circle cx="47.9" cy="48.2" r="0.90" fill="#3a2216"/><circle cx="65.3" cy="107.7" r="0.65" fill="#8a6a50"/><circle cx="44.6" cy="57.3" r="1.04" fill="#8a6a50"/><circle cx="35.4" cy="72.3" r="0.93" fill="#3a2216"/><circle cx="55.1" cy="52.3" r="0.80" fill="#2e1a10"/><circle cx="48.0" cy="124.2" r="0.42" fill="#7a5a44"/><circle cx="42.7" cy="56.2" r="0.51" fill="#8a6a50"/><circle cx="37.1" cy="62.0" r="0.95" fill="#2e1a10"/><circle cx="71.6" cy="111.6" r="0.58" fill="#8a6a50"/><circle cx="41.3" cy="62.4" r="0.89" fill="#2e1a10"/><circle cx="72.1" cy="115.1" r="0.47" fill="#3a2216"/><circle cx="62.0" cy="103.1" r="0.80" fill="#2e1a10"/><circle cx="59.8" cy="116.5" r="0.66" fill="#2e1a10"/><circle cx="46.2" cy="60.2" r="0.94" fill="#2e1a10"/><circle cx="43.1" cy="70.1" r="0.57" fill="#8a6a50"/><circle cx="74.7" cy="115.5" r="0.45" fill="#3a2216"/><circle cx="45.5" cy="124.7" r="0.45" fill="#3a2216"/><circle cx="76.2" cy="117.0" r="0.78" fill="#2e1a10"/><circle cx="49.3" cy="49.6" r="0.54" fill="#7a5a44"/><circle cx="65.1" cy="107.3" r="0.41" fill="#3a2216"/><circle cx="37.8" cy="75.4" r="0.76" fill="#3a2216"/><circle cx="66.9" cy="112.0" r="0.80" fill="#2e1a10"/><circle cx="44.4" cy="65.7" r="1.04" fill="#2e1a10"/></g>
<path d="M56 72 Q58 60 74 56 Q96 52 112 64 Q120 74 117 92 Q112 114 94 120 Q72 124 60 112 Q50 96 56 72Z" fill="#f7f7f4"/>
<path d="M102 64 Q116 72 115 90 Q108 80 96 74Z" fill="#e8e6e2"/>
<path d="M138 79 Q142 82 138 92 Q130 106 116 114 Q108 117 106 112 Q112 106 122 98 Q132 88 138 79Z" fill="url(#plant)"/>
<path d="M73 131 Q74 124 90 119 Q108 113 121 112 Q126 116 120 122 Q104 132 84 134 Q75 135 73 131Z" fill="url(#plant)"/>
<circle cx="81" cy="96" r="12.8" fill="url(#yolk)"/>
</g>
<g filter="url(#bl)" stroke-linecap="round" fill="none">
<path d="M24 84 Q48 66 72 57" stroke="#f2e8e8" stroke-width="1.3"/>
<path d="M26 92 Q46 76 68 64" stroke="#f4eeee" stroke-width="1.2"/>
<path d="M36 120 Q48 90 64 68" stroke="#eee2e2" stroke-width="1.1"/>
<path d="M30 101 Q54 84 80 70" stroke="#f2e6e8" stroke-width="1.2"/>
<path d="M46 112 Q48 88 56 66" stroke="#ecdede" stroke-width="1"/>
<path d="M70 40 Q84 34 100 30" stroke="#e8c0c0" stroke-width="1.3"/>
<path d="M74 46 Q92 40 110 40" stroke="#f2eaea" stroke-width="1.2"/>
<path d="M66 54 Q82 50 96 52" stroke="#f2e8e8" stroke-width="1.2"/>
<path d="M80 50 Q88 52 94 58" stroke="#f0f0f0" stroke-width="1"/>
</g>
<g filter="url(#bl)">
<circle cx="65" cy="75" r="4" fill="#d04040"/><circle cx="65" cy="75" r="1.8" fill="#f0c0b0"/>
<circle cx="38" cy="98" r="4" fill="#c83c3c"/><circle cx="38" cy="98" r="1.6" fill="#f0c8b8"/>
<circle cx="85" cy="47" r="3.5" fill="#d04848"/>
<path d="M53 82 Q58 77 63 84 Q60 90 53 88Z" fill="#2e7a2a"/>
<path d="M77 54 Q84 49 89 58 Q84 62 77 58Z" fill="#3a8a30"/>
<path d="M92 34 Q98 30 101 38 Q94 40 92 34Z" fill="#2e7a2a"/>
</g>
</svg>
<div class="a" style="left:717px;top:262px;width:91px;height:20px;background:#e1e1e1;border:1px solid #adadad"></div>
<div class="t" id="b5" style="left:726.40px;top:266px;font-size:11px;line-height:13px;letter-spacing:-0.352px">Bild hinzufügen</div>
<div class="a" style="left:814px;top:262px;width:65px;height:20px;background:#e1e1e1;border:1px solid #adadad"></div>
<div class="t" id="b6" style="left:823.00px;top:266px;font-size:11px;line-height:13px;letter-spacing:-0.200px">Übersicht</div>
<div class="a" style="left:692px;top:298px;width:212px;height:170px;border:1px solid #dcdcdc"></div>
<div class="a" style="left:699px;top:293px;width:60px;height:10px;background:#f0f0f0"></div>
<div class="t" id="rinf" style="left:701.20px;top:293px;font-size:11px;line-height:13px;letter-spacing:-0.310px">Rezeptinfos</div>
<div class="t" id="schw" style="left:697.80px;top:311px;font-size:11px;line-height:13px;letter-spacing:0.114px">Schwierigkeitsgrad:</div>
<div class="t" id="pers" style="left:697.80px;top:333px;font-size:11px;line-height:13px;letter-spacing:-0.029px">Personenanzahl:</div>
<div class="t" id="zzeit" style="left:697.80px;top:355px;font-size:11px;line-height:13px;letter-spacing:-0.200px">Zubereitungszeit:</div>
<div class="t" id="kzeit" style="left:697.80px;top:377px;font-size:11px;line-height:13px;letter-spacing:-0.200px">Kochzeit:</div>
<div class="a" style="left:787px;top:331px;width:101px;height:20px;background:#ffffff;border:1px solid #7a7a7a"></div>
<div class="t" id="tb0" style="left:789.60px;top:335px;font-size:11px;line-height:13px;letter-spacing:-0.247px">4 Personen</div>
<div class="a" style="left:787px;top:353px;width:101px;height:20px;background:#ffffff;border:1px solid #7a7a7a"></div>
<div class="t" id="tb1" style="left:789.60px;top:357px;font-size:11px;line-height:13px;letter-spacing:-0.200px">25 Minuten</div>
<div class="a" style="left:787px;top:375px;width:101px;height:20px;background:#ffffff;border:1px solid #7a7a7a"></div>
<div class="t" id="tb2" style="left:789.60px;top:379px;font-size:11px;line-height:13px;letter-spacing:-0.200px">55 Minuten</div>
<div class="t" id="bew" style="left:697.80px;top:401px;font-size:11px;line-height:13px;letter-spacing:-0.183px">Bewertung:</div>
<div class="t" id="qu" style="left:697.20px;top:425px;font-size:11px;line-height:13px;letter-spacing:-0.200px">Quelle:</div>
<div class="a" style="left:761px;top:422px;width:141px;height:21px;background:#ffffff;border:1px solid #7a7a7a"></div>
<div class="t" id="quv" style="left:763.20px;top:426px;font-size:11px;line-height:13px;letter-spacing:-0.200px">peruanisch</div>
<div class="t" id="anm" style="left:697.20px;top:447px;font-size:11px;line-height:13px;letter-spacing:-0.200px">Anmerkung:</div>
<div class="a" style="left:761px;top:445px;width:141px;height:20px;background:#ffffff;border:1px solid #7a7a7a"></div>
<div class="a" style="left:692px;top:475px;width:212px;height:81px;background:#ffffff;border:1px solid #828282"></div>
<div class="a" style="left:695px;top:553px;width:13px;height:1px;background:#333333"></div>
<div class="a" style="left:695px;top:478px;width:13px;height:13px;background:#ffffff;border:1px solid #333333"></div>
<div class="t" id="cl0" style="left:712.80px;top:478px;font-size:11px;line-height:13px;letter-spacing:0.000px">Hauptgericht Fleisch</div>
<div class="a" style="left:695px;top:493px;width:13px;height:13px;background:#ffffff;border:1px solid #333333"></div>
<div class="t" id="cl1" style="left:712.80px;top:493px;font-size:11px;line-height:13px;letter-spacing:0.037px">Grundrezepte (Beilagen/Plan)</div>
<div class="a" style="left:695px;top:508px;width:13px;height:13px;background:#ffffff;border:1px solid #333333"></div>
<div class="t" id="cl2" style="left:712.80px;top:508px;font-size:11px;line-height:13px;letter-spacing:0.000px">Beilage</div>
<div class="a" style="left:695px;top:523px;width:13px;height:13px;background:#ffffff;border:1px solid #333333"></div>
<div class="t" id="cl3" style="left:712.80px;top:523px;font-size:11px;line-height:13px;letter-spacing:0.000px">Plan</div>
<div class="a" style="left:695px;top:538px;width:13px;height:13px;background:#ffffff;border:1px solid #333333"></div>
<div class="t" id="cl4" style="left:712.80px;top:538px;font-size:11px;line-height:13px;letter-spacing:0.000px">Frühstück</div>
<div class="a" style="left:886px;top:477px;width:16px;height:77px;background:#f0f0f0"></div>
<div class="a" style="left:886px;top:494px;width:16px;height:17px;background:#cdcdcd"></div>
<svg class="a" style="left:0;top:0" width="907" height="583"><path d="M800.3 311.3 L808.3 320 M808.5 311.3 L800.5 319.8" stroke="#000" stroke-width="2.5" stroke-linecap="round"/><circle cx="804.3" cy="315.6" r="1.9" fill="#000"/><path transform="translate(811,308)" d="M1.2 14.4 L0.6 6.2 C-0.2 4.6 0.2 1.2 2.8 0.9 C3.9 0.8 4.6 1.2 5.1 1.6 C5.5 0.4 6.3 -0.1 7.2 0 C8 0.1 8.8 0.5 9.2 1.4 C10 1.1 11.5 1.2 12.4 1.9 C14.1 3 14.7 5.3 13.3 6.8 Q12.6 7.3 11.6 7.4 L10.2 15.3 Q5.6 15.7 1.2 14.4 Z" fill="#d2d2d2" stroke="#3c3c3c" stroke-width="1"/><path transform="translate(827,308)" d="M1.2 14.4 L0.6 6.2 C-0.2 4.6 0.2 1.2 2.8 0.9 C3.9 0.8 4.6 1.2 5.1 1.6 C5.5 0.4 6.3 -0.1 7.2 0 C8 0.1 8.8 0.5 9.2 1.4 C10 1.1 11.5 1.2 12.4 1.9 C14.1 3 14.7 5.3 13.3 6.8 Q12.6 7.3 11.6 7.4 L10.2 15.3 Q5.6 15.7 1.2 14.4 Z" fill="#d2d2d2" stroke="#3c3c3c" stroke-width="1"/><path transform="translate(843,308)" d="M1.2 14.4 L0.6 6.2 C-0.2 4.6 0.2 1.2 2.8 0.9 C3.9 0.8 4.6 1.2 5.1 1.6 C5.5 0.4 6.3 -0.1 7.2 0 C8 0.1 8.8 0.5 9.2 1.4 C10 1.1 11.5 1.2 12.4 1.9 C14.1 3 14.7 5.3 13.3 6.8 Q12.6 7.3 11.6 7.4 L10.2 15.3 Q5.6 15.7 1.2 14.4 Z" fill="#d2d2d2" stroke="#3c3c3c" stroke-width="1"/><path transform="translate(859,308)" d="M1.2 14.4 L0.6 6.2 C-0.2 4.6 0.2 1.2 2.8 0.9 C3.9 0.8 4.6 1.2 5.1 1.6 C5.5 0.4 6.3 -0.1 7.2 0 C8 0.1 8.8 0.5 9.2 1.4 C10 1.1 11.5 1.2 12.4 1.9 C14.1 3 14.7 5.3 13.3 6.8 Q12.6 7.3 11.6 7.4 L10.2 15.3 Q5.6 15.7 1.2 14.4 Z" fill="#d2d2d2" stroke="#3c3c3c" stroke-width="1"/><path transform="translate(875,308)" d="M1.2 14.4 L0.6 6.2 C-0.2 4.6 0.2 1.2 2.8 0.9 C3.9 0.8 4.6 1.2 5.1 1.6 C5.5 0.4 6.3 -0.1 7.2 0 C8 0.1 8.8 0.5 9.2 1.4 C10 1.1 11.5 1.2 12.4 1.9 C14.1 3 14.7 5.3 13.3 6.8 Q12.6 7.3 11.6 7.4 L10.2 15.3 Q5.6 15.7 1.2 14.4 Z" fill="#d2d2d2" stroke="#3c3c3c" stroke-width="1"/><path d="M761 404.3 L769 413 M769.2 404.3 L761.2 412.8" stroke="#000" stroke-width="2.5" stroke-linecap="round"/><circle cx="765" cy="408.6" r="1.9" fill="#000"/><polygon points="782.00,400.40 784.76,406.20 791.13,407.03 786.47,411.45 787.64,417.77 782.00,414.70 776.36,417.77 777.53,411.45 772.87,407.03 779.24,406.20" fill="#d6cf3e" stroke="#c9b468" stroke-width="0.8" stroke-linejoin="round"/><polygon points="804.00,400.40 806.76,406.20 813.13,407.03 808.47,411.45 809.64,417.77 804.00,414.70 798.36,417.77 799.53,411.45 794.87,407.03 801.24,406.20" fill="#d6cf3e" stroke="#c9b468" stroke-width="0.8" stroke-linejoin="round"/><polygon points="826.00,400.40 828.76,406.20 835.13,407.03 830.47,411.45 831.64,417.77 826.00,414.70 820.36,417.77 821.53,411.45 816.87,407.03 823.24,406.20" fill="#d6cf3e" stroke="#c9b468" stroke-width="0.8" stroke-linejoin="round"/><polygon points="848.00,400.40 850.76,406.20 857.13,407.03 852.47,411.45 853.64,417.77 848.00,414.70 842.36,417.77 843.53,411.45 838.87,407.03 845.24,406.20" fill="#d6cf3e" stroke="#c9b468" stroke-width="0.8" stroke-linejoin="round"/><polygon points="870.00,400.40 872.76,406.20 879.13,407.03 874.47,411.45 875.64,417.77 870.00,414.70 864.36,417.77 865.53,411.45 860.87,407.03 867.24,406.20" fill="#d6cf3e" stroke="#c9b468" stroke-width="0.8" stroke-linejoin="round"/><path d="M697 484.3 L699.8 487.2 L705.8 481.4" fill="none" stroke="#333" stroke-width="1.3"/></svg>
<svg class="a" style="left:0;top:0" width="907" height="583">
<path d="M218.75 103.5 L223 107.69999999999999 L227.25 103.5" fill="none" stroke="#444" stroke-width="1.1"/>
<path d="M218.0 135.3 L221.5 131.7 L225.0 135.3" fill="none" stroke="#575757" stroke-width="2.0"/>
<path d="M218.0 525.7 L221.5 529.3 L225.0 525.7" fill="none" stroke="#575757" stroke-width="2.0"/>
<path d="M24.8 541.0 L21.2 544.5 L24.8 548.0" fill="none" stroke="#575757" stroke-width="2.0"/>
<path d="M203.2 541.0 L206.8 544.5 L203.2 548.0" fill="none" stroke="#575757" stroke-width="2.0"/>
<path d="M669.0 154.3 L672.5 150.7 L676.0 154.3" fill="none" stroke="#575757" stroke-width="2.0"/>
<path d="M669.0 253.7 L672.5 257.3 L676.0 253.7" fill="none" stroke="#575757" stroke-width="2.0"/>
<path d="M669.0 307.8 L672.5 304.2 L676.0 307.8" fill="none" stroke="#575757" stroke-width="2.0"/>
<path d="M669.0 543.7 L672.5 547.3 L676.0 543.7" fill="none" stroke="#575757" stroke-width="2.0"/>
<path d="M888.75 430.4 L893 434.6 L897.25 430.4" fill="none" stroke="#444" stroke-width="1.1"/>
<path d="M890.5 487.8 L894 484.2 L897.5 487.8" fill="none" stroke="#575757" stroke-width="2.0"/>
<path d="M890.5 543.2 L894 546.8 L897.5 543.2" fill="none" stroke="#575757" stroke-width="2.0"/>
</svg>
</body></html>
